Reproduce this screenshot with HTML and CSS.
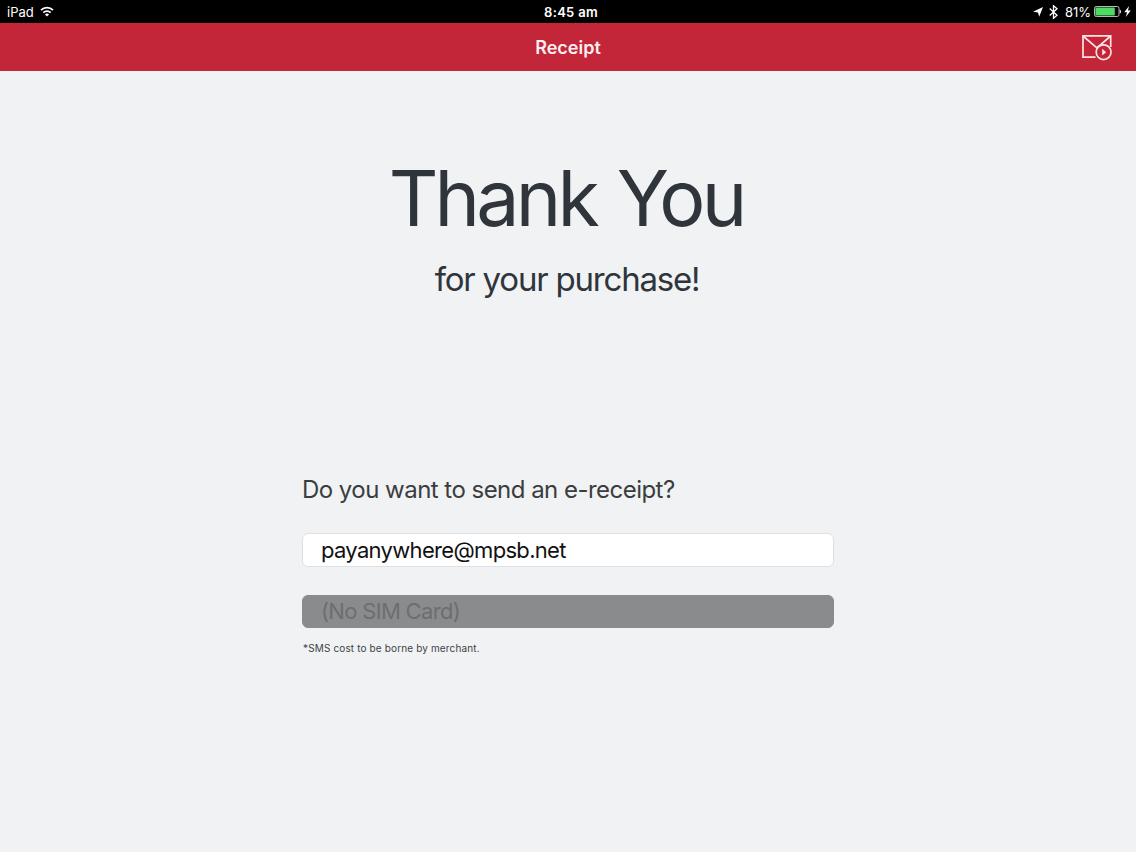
FILE: index.html
```html
<!DOCTYPE html>
<html lang="en">
<head>
    <meta charset="UTF-8">
    <meta name="viewport" content="width=device-width, initial-scale=1.0">
    <title>Receipt</title>
    <link rel="stylesheet" href="styles.css">
</head>
<body>
    <div class="status-bar">
        <div class="status-left">
            <span>iPad</span>
            <svg class="wifi" width="14" height="11" viewBox="0 0 14 11">
                <path d="M1 4.2a8.5 8.5 0 0 1 12 0M3.3 6.6a5.2 5.2 0 0 1 7.4 0" fill="none" stroke="#fff" stroke-width="1.7"/>
                <path d="M7 10.6L4.9 8.5a3 3 0 0 1 4.2 0z" fill="#fff"/>
            </svg>
        </div>
        <div class="status-time">8:45 am</div>
        <div class="status-right">
            <svg class="location" width="10" height="10" viewBox="0 0 10 10">
                <path d="M10 0L6.2 9.8L5 5.4L0 4.8z" fill="#fff"/>
            </svg>
            <svg class="bluetooth" width="9" height="14" viewBox="0 0 9 14">
                <path d="M0.7 3.6L8 10.3L4.5 13.3V0.7L8 3.7L0.7 10.4" fill="none" stroke="#fff" stroke-width="1.3"/>
            </svg>
            <span class="percent">81%</span>
            <svg class="battery" width="27" height="11" viewBox="0 0 27 11">
                <rect x="0.5" y="0.5" width="24.5" height="10" rx="1.8" fill="none" stroke="#ccc" stroke-width="0.9"/>
                <rect x="1.4" y="1.4" width="19.4" height="8.2" rx="0.7" fill="#4cd964"/>
                <path d="M25.7 3.5a2.1 2.1 0 0 1 0 4z" fill="#ddd"/>
            </svg>
            <svg class="bolt" width="7" height="11" viewBox="0 0 7 11">
                <path d="M5 0L0.3 6.2h2.8L1.8 11L6.8 4.6H4z" fill="#fff"/>
            </svg>
        </div>
    </div>

    <div class="header">
        <h1>Receipt</h1>
        <button class="send-button" type="button" aria-label="Send receipt">
            <svg width="32" height="28" viewBox="0 0 32 28">
                <path d="M14.5 23.1H2V1.9H29.7V13" fill="none" stroke="#fbe4e7" stroke-width="1.7"/>
                <path d="M2 2L15.9 14L29.7 2" fill="none" stroke="#fbe4e7" stroke-width="1.7"/>
                <circle cx="22.6" cy="18.2" r="7.4" fill="#c32539" stroke="#fbe4e7" stroke-width="1.7"/>
                <path d="M21.2 14.8V21.6L25.2 18.2z" fill="#fbe4e7"/>
            </svg>
        </button>
    </div>

    <div class="content">
        <div class="thanks">Thank You</div>
        <div class="thanks-sub">for your purchase!</div>

        <form class="receipt-form">
            <label for="email">Do you want to send an e-receipt?</label>
            <input id="email" type="text" value="payanywhere@mpsb.net">
            <input id="phone" type="text" placeholder="(No SIM Card)" disabled>
            <p class="note">*SMS cost to be borne by merchant.</p>
        </form>
    </div>
</body>
</html>
```
FILE: styles.css
```css
* {
    box-sizing: border-box;
}

body {
    margin: 0;
    height: 100vh;
    overflow: hidden;
    font-family: Inter, "Liberation Sans", sans-serif;
    background-color: #f0f2f4;
    color: #2f353b;
}

/* iPad status bar */
.status-bar {
    display: grid;
    grid-template-columns: 1fr auto 1fr;
    align-items: center;
    height: 23px;
    padding: 0 5px 0 7px;
    background-color: #000;
    color: #fff;
    font-size: 13px;
}

.status-left,
.status-right {
    display: flex;
    align-items: center;
}

.status-right {
    justify-content: flex-end;
}

.wifi {
    margin-left: 6px;
}

.status-time {
    padding-left: 4px;
    font-weight: 600;
    letter-spacing: 0.3px;
}

.bluetooth {
    margin: 0 7px 0 6px;
}

.battery {
    margin: 0 3px 0 3px;
}

.header {
    display: grid;
    grid-template-columns: 1fr auto 1fr;
    align-items: center;
    height: 48px;
    padding: 0 23px;
    background-color: #c32539;
    color: #fdeef0;
}

.header h1 {
    grid-column: 2;
    margin: 0;
    font-size: 18px;
    font-weight: 600;
}

.send-button {
    justify-self: end;
    padding: 2px 0 0;
    border: none;
    background: none;
    line-height: 0;
    cursor: pointer;
}

.content {
    padding-top: 81px;
    text-align: center;
}

.thanks {
    margin-left: -4px;
    font-size: 77px;
    line-height: 92px;
    letter-spacing: -3.8px;
    word-spacing: 3px;
}

.thanks-sub {
    margin: 14px 0 0 -2px;
    font-size: 33px;
    line-height: 42px;
    letter-spacing: -1.2px;
}

.receipt-form {
    display: flex;
    flex-direction: column;
    width: 532px;
    margin: 175px auto 0;
    text-align: left;
}

.receipt-form label {
    font-size: 24px;
    line-height: 30px;
    letter-spacing: -0.53px;
    color: #3a3d40;
}

.receipt-form input {
    width: 100%;
    height: 34px;
    margin-top: 28px;
    padding: 0 18px;
    border: 1px solid #dfe0e3;
    border-radius: 6px;
    background-color: #fff;
    color: #111;
    font-family: inherit;
    font-size: 22px;
    letter-spacing: -0.68px;
}

.receipt-form input:disabled {
    height: 33px;
    padding-bottom: 1px;
    border-color: #8a8b8d;
    background-color: #8a8b8d;
}

.receipt-form input::placeholder {
    color: #6d6e70;
    opacity: 1;
}

.note {
    margin: 13px 0 0 1px;
    font-size: 10px;
    line-height: 14px;
    letter-spacing: 0.14px;
    color: #404346;
}
```
